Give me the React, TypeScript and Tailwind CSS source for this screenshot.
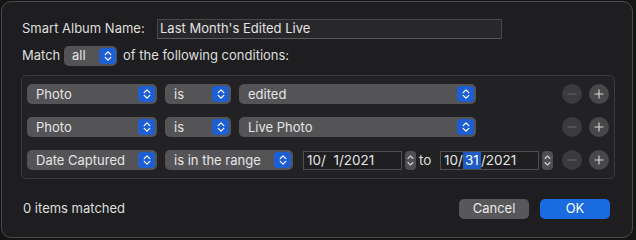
import React from "react";

const Chevrons = () => (
  <svg viewBox="0 0 16 16" width="16" height="16">
    <path d="M5.2 6.6 L8 3.9 L10.8 6.6" fill="none" stroke="white" strokeWidth="1.3" strokeLinecap="round" strokeLinejoin="round" />
    <path d="M5.2 9.4 L8 12.1 L10.8 9.4" fill="none" stroke="white" strokeWidth="1.3" strokeLinecap="round" strokeLinejoin="round" />
  </svg>
);

const Popup = ({ label, width }: { label: string; width: string }) => (
  <div className={`flex h-[20px] ${width} items-center justify-between rounded-[5px] bg-[#545457] pl-[9px] pr-[2px]`}>
    <span className="text-[13px] leading-none text-[#e4e4e4]">{label}</span>
    <div className="flex h-[16px] w-[17px] items-center justify-center rounded-[4px] bg-[#1d5fd3]">
      <Chevrons />
    </div>
  </div>
);

const Stepper = () => (
  <div className="flex h-[19px] w-[11px] items-center justify-center rounded-[4px] bg-[#4f4f52]">
    <svg viewBox="0 0 11 19" width="11" height="19">
      <path d="M3 7.5 L5.5 5 L8 7.5" fill="none" stroke="#d0d0d0" strokeWidth="1.1" strokeLinecap="round" strokeLinejoin="round" />
      <path d="M3 11.5 L5.5 14 L8 11.5" fill="none" stroke="#d0d0d0" strokeWidth="1.1" strokeLinecap="round" strokeLinejoin="round" />
    </svg>
  </div>
);

const MinusPlus = () => (
  <div className="ml-auto mr-[5px] flex items-center gap-[7px]">
    <svg width="20" height="20" viewBox="0 0 20 20">
      <circle cx="10" cy="10" r="10" fill="#3b3b3e" />
      <path d="M5.5 10 H14.5" stroke="#68686b" strokeWidth="1" />
    </svg>
    <svg width="20" height="20" viewBox="0 0 20 20">
      <circle cx="10" cy="10" r="10" fill="#48484b" />
      <path d="M5.5 10 H14.5 M10 5.5 V14.5" stroke="#dadada" strokeWidth="1.1" />
    </svg>
  </div>
);

export default function App() {
  return (
    <div className="h-[240px] w-[636px] bg-[#141414] pt-[1px] pl-[1px]" style={{ fontFamily: "Inter, 'Noto Sans', sans-serif" }}>
      <div className="flex h-[237px] w-[632px] flex-col rounded-[10px] border border-[#4a4a4c] bg-[#1e1e20] text-[13px] text-[#dedede]">
        <div className="mt-[17px] flex h-[20px] items-center pl-[20px]">
          <span className="w-[135px]">Smart Album Name:</span>
          <div className="flex h-[20px] w-[345px] items-center border border-[#48484b] border-b-[#5a5a5c] bg-[#28282b] pl-[2px]">
            <span className="text-[#e4e4e4]">Last Month's Edited Live</span>
          </div>
        </div>
        <div className="mt-[7px] flex h-[20px] items-center pl-[20px]">
          <span className="w-[42px]">Match</span>
          <div className="flex h-[20px] w-[53px] items-center justify-between rounded-[5px] bg-[#545457] pl-[8px] pr-[1px]">
            <span className="text-[#e4e4e4]">all</span>
            <div className="flex h-[16px] w-[17px] items-center justify-center rounded-[4px] bg-[#1d5fd3]">
              <Chevrons />
            </div>
          </div>
          <span className="ml-[6px]">of the following conditions:</span>
        </div>
        <div className="ml-[19px] mt-[9px] flex h-[104px] w-[594px] flex-col gap-[13px] rounded-[5px] border border-[#3a3a3d] bg-[#222225] pl-[5px] pt-[8px]">
          <div className="flex h-[20px] items-center">
            <Popup label="Photo" width="w-[130px]" />
            <div className="ml-[8px]"><Popup label="is" width="w-[66px]" /></div>
            <div className="ml-[8px]"><Popup label="edited" width="w-[237px]" /></div>
            <MinusPlus />
          </div>
          <div className="flex h-[20px] items-center">
            <Popup label="Photo" width="w-[130px]" />
            <div className="ml-[8px]"><Popup label="is" width="w-[66px]" /></div>
            <div className="ml-[8px]"><Popup label="Live Photo" width="w-[237px]" /></div>
            <MinusPlus />
          </div>
          <div className="flex h-[20px] items-center">
            <Popup label="Date Captured" width="w-[130px]" />
            <div className="ml-[8px]"><Popup label="is in the range" width="w-[128px]" /></div>
            <div className="ml-[10px] flex h-[19px] w-[99px] items-center border border-[#4e4e51] bg-[#1f1f22] pl-[3px]">
              <span className="whitespace-pre text-[13.5px] text-[#e4e4e4]">10/  1/2021</span>
            </div>
            <div className="ml-[3px]"><Stepper /></div>
            <span className="ml-[3px] w-[21px] text-[13.5px]">to</span>
            <div className="flex h-[19px] w-[99px] items-center border border-[#4e4e51] bg-[#1f1f22] pl-[3px] text-[13.5px] text-[#e4e4e4]">
              <span className="whitespace-pre">10/</span>
              <span className="inline-block h-[17px] w-[18px] bg-[#1f5bc6] text-center leading-[17px] text-white">31</span>
              <span className="whitespace-pre">/2021</span>
            </div>
            <div className="ml-[3px]"><Stepper /></div>
            <MinusPlus />
          </div>
        </div>
        <div className="mt-[20px] flex h-[20px] items-center pl-[21px]">
          <span>0 items matched</span>
          <button className="ml-auto flex h-[20px] w-[70px] items-center justify-center rounded-[5px] bg-[#58585b] text-[#e8e8e8]">Cancel</button>
          <button className="ml-[11px] mr-[22px] flex h-[20px] w-[70px] items-center justify-center rounded-[5px] bg-[#1a6ae0] text-white">OK</button>
        </div>
      </div>
    </div>
  );
}
